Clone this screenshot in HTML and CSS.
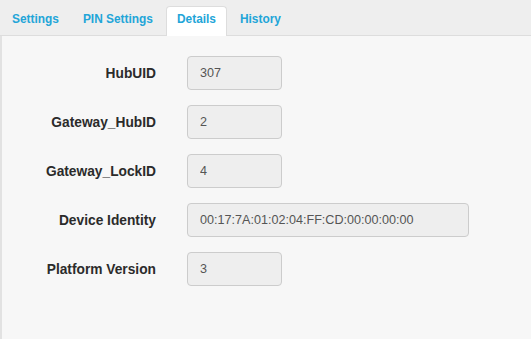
FILE: index.html
```html
<!DOCTYPE html>
<html lang="en">
<head>
<meta charset="utf-8">
<title>Details</title>
<link rel="stylesheet" href="styles.css">
</head>
<body>
<nav class="tabs">
  <a class="tab">Settings</a>
  <a class="tab">PIN Settings</a>
  <a class="tab active">Details</a>
  <a class="tab">History</a>
</nav>
<main class="panel">
  <form class="form">
    <label class="label">HubUID</label>
    <input class="field" type="text" readonly value="307">
    <label class="label">Gateway_HubID</label>
    <input class="field" type="text" readonly value="2">
    <label class="label">Gateway_LockID</label>
    <input class="field" type="text" readonly value="4">
    <label class="label">Device Identity</label>
    <input class="field wide" type="text" readonly value="00:17:7A:01:02:04:FF:CD:00:00:00:00">
    <label class="label">Platform Version</label>
    <input class="field" type="text" readonly value="3">
  </form>
</main>
</body>
</html>
```

FILE: styles.css
```css
html, body {
  height: 100%;
}
body {
  margin: 0;
  display: flex;
  flex-direction: column;
  background: #eeeeee;
  font-family: "Liberation Sans", Arial, sans-serif;
  color: #333;
}
.tabs {
  display: flex;
  gap: 2px;
  padding: 6px 0 0 1px;
  border-bottom: 1px solid #dddddd;
  background: #eeeeee;
}
.tab {
  display: block;
  padding: 0 10px 4px;
  line-height: 24px;
  border: 1px solid transparent;
  border-bottom: 0;
  margin-bottom: -1px;
  border-radius: 4px 4px 0 0;
  font-size: 11.9px;
  font-weight: bold;
  color: #22a5d8;
  cursor: pointer;
}
.tab.active {
  background: #ffffff;
  border-color: #dddddd;
  padding-bottom: 5px;
}
.panel {
  flex: 1;
  background: #f7f7f7;
  border-left: 2px solid #e2e2e2;
}
.form {
  display: grid;
  grid-template-columns: 154px auto;
  column-gap: 31px;
  row-gap: 15px;
  align-items: center;
  justify-items: start;
  padding-top: 20px;
  margin: 0;
}
.label {
  justify-self: end;
  font-size: 13.75px;
  font-weight: bold;
  color: #2b2b2b;
}
.field {
  box-sizing: border-box;
  width: 95px;
  height: 34px;
  margin: 0;
  padding: 0 12px;
  border: 1px solid #cccccc;
  border-radius: 4px;
  background: #eeeeee;
  font-family: "Liberation Sans", Arial, sans-serif;
  font-size: 12.6px;
  color: #555555;
  outline: none;
}
.field.wide {
  width: 282px;
}
```
